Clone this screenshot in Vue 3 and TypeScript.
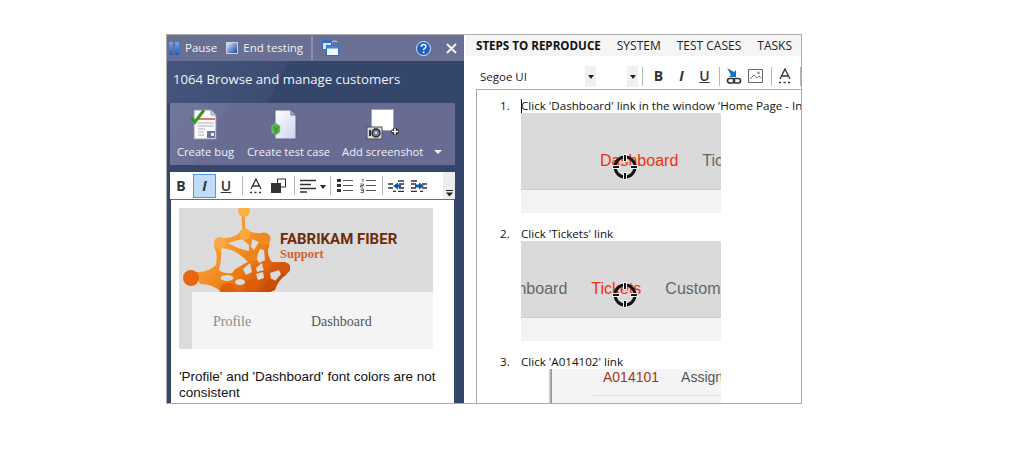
<script setup lang="ts">
const tabs = ['SYSTEM', 'TEST CASES', 'TASKS']
</script>

<template>
  <div class="window">
    <aside class="runner">
      <header class="topbar">
        <svg class="ico-pause" width="11" height="13" viewBox="0 0 11 13">
          <rect x="0" y="0" width="4" height="13" fill="url(#blueBar)" />
          <rect x="6" y="0" width="4" height="13" fill="url(#blueBar)" />
          <defs>
            <linearGradient id="blueBar" x1="0" y1="0" x2="0" y2="1">
              <stop offset="0" stop-color="#6fa8e8" />
              <stop offset="1" stop-color="#1c5fb8" />
            </linearGradient>
            <linearGradient id="blueSquare" x1="0" y1="0" x2="1" y2="1">
              <stop offset="0" stop-color="#e6eefb" />
              <stop offset="1" stop-color="#12409c" />
            </linearGradient>
          </defs>
        </svg>
        <span class="top-label pause">Pause</span>
        <svg class="ico-stop" width="12" height="12" viewBox="0 0 12 12">
          <rect x="0.5" y="0.5" width="11" height="11" fill="url(#blueSquare)" stroke="#c9d2e6" />
        </svg>
        <span class="top-label">End testing</span>
        <i class="top-sep"></i>
        <svg class="ico-windows" width="17" height="16" viewBox="0 0 17 16">
          <rect x="0.5" y="0.5" width="9" height="9" fill="#dfe8f6" stroke="#2f6fc4" />
          <rect x="0.5" y="0.5" width="9" height="2.5" fill="#2f6fc4" />
          <path d="M10 2 q3 -2 5 0" fill="none" stroke="#c8cde0" stroke-width="1.2" />
          <rect x="4.5" y="5.5" width="12" height="10" fill="#f4f7fc" stroke="#2f6fc4" />
          <rect x="4.5" y="5.5" width="12" height="3" fill="#3f83d8" />
        </svg>
        <svg class="ico-help" width="15" height="15" viewBox="0 0 15 15">
          <circle cx="7.5" cy="7.5" r="7" fill="#1d5fc9" stroke="#dfe8fa" stroke-width="1" />
          <path d="M5.2 5.8 q0.2 -2.2 2.4 -2.2 q2.3 0 2.3 2 q0 1.2 -1.3 1.8 q-1 0.5 -1 1.6" fill="none" stroke="#fff" stroke-width="1.5" />
          <rect x="6.8" y="10.4" width="1.6" height="1.7" fill="#fff" />
        </svg>
        <svg class="ico-close" width="11" height="11" viewBox="0 0 11 11">
          <path d="M1 1 L10 10 M10 1 L1 10" stroke="#f2f2f2" stroke-width="2" />
        </svg>
      </header>

      <div class="title">1064 Browse and manage customers</div>

      <div class="actions">
        <button class="action a-bug">
          <svg width="28" height="32" viewBox="0 0 28 32">
            <path d="M4 2 H21 L26 7 V31 H4 Z" fill="#fbfbfd" stroke="#8f93ad" />
            <path d="M21 2 V7 H26" fill="#cfd3e4" stroke="#8f93ad" />
            <path d="M9 11 H25" stroke="#e0402a" stroke-width="1.4" />
            <path d="M8 15 H24 M8 18 H24 M8 21 H15 M8 24 H14 M8 27 H14" stroke="#a9adc2" />
            <rect x="17" y="23" width="8" height="7" fill="#6e7498" />
            <rect x="21" y="25" width="3" height="3" fill="#eee" />
            <path d="M1 9 L5 14 L14 2" fill="none" stroke="#2f9a1e" stroke-width="3" />
          </svg>
          <span>Create bug</span>
        </button>
        <button class="action a-case">
          <svg width="28" height="32" viewBox="0 0 28 32">
            <defs>
              <linearGradient id="pageFill" x1="0" y1="0" x2="1" y2="1">
                <stop offset="0" stop-color="#ffffff" />
                <stop offset="1" stop-color="#ccd4ee" />
              </linearGradient>
            </defs>
            <path d="M5 2 H21 L26 7 V31 H5 Z" fill="url(#pageFill)" stroke="#5d6488" />
            <path d="M21 2 V7 H26 Z" fill="#aeb4cc" stroke="#5d6488" />
            <path d="M6 15 L10 18 V24 L6 27 L2 24 V18 Z" fill="#4fb04a" stroke="#9ad88e" stroke-width="0.7" />
            <path d="M2.5 18.5 L6 21 L9.5 18.5 M6 21 V26.5" fill="none" stroke="#2c7f2e" stroke-width="0.7" />
          </svg>
          <span>Create test case</span>
        </button>
        <button class="action">
          <svg width="34" height="32" viewBox="0 0 34 32">
            <rect x="5.5" y="1.5" width="22" height="21" fill="#fff" stroke="#9b9ba8" stroke-dasharray="2 1" />
            <rect x="1" y="19" width="15" height="12" fill="#d9d9dc" stroke="#4b4b55" />
            <rect x="3" y="22" width="2" height="6" fill="#333" />
            <circle cx="10" cy="25" r="4" fill="#6a7b90" stroke="#222" stroke-width="1.3" />
            <circle cx="10" cy="25" r="1.4" fill="#c5d8ec" />
            <path d="M29 20 V27 M25.5 23.5 H32.5" stroke="#222" stroke-width="3.8" />
            <path d="M29 20.5 V26.5 M26 23.5 H32" stroke="#fff" stroke-width="1.6" />
          </svg>
          <span>Add screenshot</span>
        </button>
        <i class="action-more"></i>
      </div>

      <div class="fmt">
        <span class="btn b-bold">B</span>
        <span class="btn b-italic">I</span>
        <span class="btn b-under">U</span>
        <i class="sep s1"></i>
        <span class="btn">
          <svg width="14" height="16" viewBox="0 0 14 16">
            <path d="M2 11 L7 1 L12 11 M4 8 H10" fill="none" stroke="#333" stroke-width="1.3" />
            <path d="M1 14.5 H13" stroke="#333" stroke-width="1.5" stroke-dasharray="2 2.5" />
          </svg>
        </span>
        <span class="btn w-hl">
          <svg width="15" height="15" viewBox="0 0 15 15">
            <rect x="6.5" y="1" width="8" height="8" fill="none" stroke="#333" />
            <rect x="0" y="5" width="10" height="10" fill="#333" />
          </svg>
        </span>
        <i class="sep s2"></i>
        <span class="btn b-align">
          <svg width="16" height="14" viewBox="0 0 16 14">
            <path d="M0 1.5 H16 M0 5.5 H11 M0 9.5 H16 M0 13 H7" stroke="#333" stroke-width="1.7" />
          </svg>
        </span>
        <span class="caret-btn"></span>
        <i class="sep s2b"></i>
        <span class="btn b-list">
          <svg width="16" height="14" viewBox="0 0 16 14">
            <path d="M0 0 h4 v3 h-4 z M0 5 h4 v3 h-4 z M0 10 h4 v3 h-4 z" fill="#333" />
            <path d="M6 1.5 H16 M6 6.5 H16 M6 11.5 H16" stroke="#555" />
          </svg>
        </span>
        <span class="btn b-num">
          <svg width="16" height="14" viewBox="0 0 16 14">
            <path d="M1 0 h2 v3 M0.5 5 h3 v1.5 h-3 v1.5 h3 M0.5 10 h3 v3.5 h-3 M1 11.5 h2" fill="none" stroke="#555" stroke-width="0.9" />
            <path d="M6 1.5 H16 M6 6.5 H16 M6 11.5 H16" stroke="#555" />
          </svg>
        </span>
        <i class="sep s3"></i>
        <span class="btn">
          <svg width="16" height="12" viewBox="0 0 16 12">
            <path d="M0 4 H5 M0 8 H5 M10 1 H16 M11 4 H16 M11 8 H16 M10 11.5 H16 M5 11.5 H8" stroke="#333" stroke-width="1.4" />
            <path d="M5 6 L10 2.5 V4.5 H13 V7.5 H10 V9.5 Z" fill="#0f55b4" />
          </svg>
        </span>
        <span class="btn b-indent">
          <svg width="16" height="12" viewBox="0 0 16 12">
            <path d="M0 1 H6 M0 4 H5 M0 8 H5 M0 11.5 H6 M11 4 H16 M11 8 H16 M9 11.5 H12" stroke="#333" stroke-width="1.4" />
            <path d="M13 6 L8 2.5 V4.5 H4 V7.5 H8 V9.5 Z" fill="#0f55b4" />
          </svg>
        </span>
        <span class="overflow">
          <svg width="7" height="7" viewBox="0 0 7 7">
            <path d="M0 0.5 H7" stroke="#222" />
            <path d="M0 2.5 H7 L3.5 6.5 Z" fill="#222" />
          </svg>
        </span>
      </div>

      <div class="note">
        <div class="shot">
          <div class="shot-head">
            <svg class="logo" width="111" height="84" viewBox="179 208 111 84">
              <defs>
                <linearGradient id="orange" gradientUnits="userSpaceOnUse" x1="215" y1="225" x2="280" y2="292">
                  <stop offset="0" stop-color="#fdb048" />
                  <stop offset="0.5" stop-color="#ef8218" />
                  <stop offset="1" stop-color="#c23a04" />
                </linearGradient>
              </defs>
              <path fill="none" stroke="#f79a2e" stroke-width="3" d="M244 208 Q242 222 245 234" />
              <path
                fill="url(#orange)"
                d="M241 231 L249 231 Q256 234 264 233 Q272 240 268 250 Q268 258 272 262 L285 262 Q292 268 286 275 Q278 280 275 290 L268 293 L222 293 Q214 284 200 284 L194 272 Q208 273 216 265 Q218 254 214 247 Q216 238 225 238 Q236 238 241 231 Z"
              />
              <g fill="#dcdcdc">
                <path d="M221 248 Q236 249 248 262 Q238 266 232 273 Q224 274 219 270 Q222 259 221 248 Z" />
                <path d="M228 243 L242 239 L249 245 L249 251 Q238 249 228 243 Z" />
                <path d="M252 239 L259 242 L254 250 L251 247 Z" />
                <path d="M260 249 L264 250 L265 260 L259 263 L256 258 Z" />
                <path d="M256 268 L262 263 L264 270 L257 272 Z" />
                <path d="M243 269 L250 263 L252 272 L246 275 Z" />
                <path d="M256 274 L263 272 L264 278 L258 280 Z" />
                <path d="M270 273 L279 270 L281 274 L275 281 L271 279 Z" />
                <ellipse cx="227" cy="278" rx="6.5" ry="3" />
                <ellipse cx="240" cy="282" rx="5" ry="3" />
              </g>
              <circle cx="244" cy="211" r="6" fill="#fbb040" />
              <circle cx="245" cy="234" r="5.5" fill="#f9a83a" />
              <circle cx="220" cy="243" r="6" fill="#fba944" />
              <circle cx="264" cy="239" r="6.5" fill="#f18a1e" />
              <circle cx="252" cy="256" r="5.5" fill="#ee8518" />
              <circle cx="191" cy="278" r="8" fill="#e8670c" />
              <circle cx="285" cy="268" r="5.5" fill="#d6560a" />
              <circle cx="266" cy="266" r="3.5" fill="#e06a0c" />
              <circle cx="238" cy="273" r="4.5" fill="#ea7a10" />
              <circle cx="271" cy="284" r="5" fill="#cf4b08" />
              <circle cx="252" cy="285" r="6" fill="#dc5c0a" />
              <circle cx="228" cy="291" r="8" fill="#e0600c" />
            </svg>
            <div class="brand">
              <div class="brand-name">FABRIKAM FIBER</div>
              <div class="brand-sub">Support</div>
            </div>
          </div>
          <div class="shot-nav">
            <span class="nav-profile">Profile</span>
            <span class="nav-dash">Dashboard</span>
          </div>
        </div>
        <p class="note-text">'Profile' and 'Dashboard' font colors are not consistent</p>
      </div>
    </aside>

    <section class="details">
      <nav class="tabs">
        <span class="tab active">STEPS TO REPRODUCE</span>
        <span v-for="t in tabs" :key="t" class="tab">{{ t }}</span>
      </nav>

      <div class="rt-bar">
        <span class="font-name">Segoe UI</span>
        <span class="drop"></span>
        <span class="drop d2"></span>
        <i class="sep r1"></i>
        <span class="btn b-bold rb">B</span>
        <span class="btn b-italic-plain rb">I</span>
        <span class="btn b-under rb">U</span>
        <i class="sep r2"></i>
        <span class="btn">
          <svg width="16" height="16" viewBox="0 0 16 16">
            <path d="M1 0 L8 4 L10 2 V9 H3 L5 7 Z" fill="#1173c6" />
            <rect x="1.5" y="10.5" width="7" height="4.5" rx="2.2" fill="none" stroke="#333" stroke-width="1.7" />
            <rect x="7.5" y="10.5" width="7" height="4.5" rx="2.2" fill="none" stroke="#333" stroke-width="1.7" />
          </svg>
        </span>
        <span class="btn r-icon2">
          <svg width="15" height="14" viewBox="0 0 15 14">
            <rect x="0.5" y="0.5" width="14" height="13" fill="#fff" stroke="#666" />
            <path d="M2 10 L6 6 L9 9 L11 7 L13 9" fill="none" stroke="#777" />
            <circle cx="10.5" cy="3.8" r="1.2" fill="#888" />
          </svg>
        </span>
        <i class="sep r3"></i>
        <span class="btn">
          <svg width="14" height="16" viewBox="0 0 14 16">
            <path d="M2 11 L7 1 L12 11 M4 8 H10" fill="none" stroke="#333" stroke-width="1.3" />
            <path d="M1 14.5 H13" stroke="#333" stroke-width="1.5" stroke-dasharray="2 2.5" />
          </svg>
        </span>
        <i class="sep r4"></i>
      </div>

      <div class="editor">
        <div class="step">
          <span class="num">1.</span>
          <div class="step-body">
            <div class="line"><i class="text-caret"></i>Click 'Dashboard' link in the window 'Home Page - Internet Explorer'</div>
            <div class="crop">
              <div class="crop-top">
                <span class="hot">Dashboard</span>
                <span class="dim">Tickets</span>
              </div>
              <svg class="target" width="26" height="26" viewBox="0 0 26 26">
                <circle cx="13" cy="13" r="10" fill="none" stroke="#151515" stroke-width="3" />
                <path d="M13 0 V8 M13 18 V26 M0 13 H8 M18 13 H26" stroke="#f4f4f4" stroke-width="4" />
                <path d="M13 1 V7 M13 19 V25 M1 13 H7 M19 13 H25" stroke="#151515" stroke-width="2" />
              </svg>
            </div>
          </div>
        </div>

        <div class="step">
          <span class="num">2.</span>
          <div class="step-body">
            <div class="line">Click 'Tickets' link</div>
            <div class="crop">
              <div class="crop-top">
                <span class="dim shift">Dashboard</span>
                <span class="hot">Tickets</span>
                <span class="dim">Customers</span>
              </div>
              <svg class="target" width="26" height="26" viewBox="0 0 26 26">
                <circle cx="13" cy="13" r="10" fill="none" stroke="#151515" stroke-width="3" />
                <path d="M13 0 V8 M13 18 V26 M0 13 H8 M18 13 H26" stroke="#f4f4f4" stroke-width="4" />
                <path d="M13 1 V7 M13 19 V25 M1 13 H7 M19 13 H25" stroke="#151515" stroke-width="2" />
              </svg>
            </div>
          </div>
        </div>

        <div class="step">
          <span class="num">3.</span>
          <div class="step-body">
            <div class="line">Click 'A014102' link</div>
            <div class="crop crop-table">
              <div class="table-wrap">
                <div class="table-row">
                  <span class="ticket">A014101</span>
                  <span class="assign">Assigned</span>
                </div>
              </div>
            </div>
          </div>
        </div>
      </div>
    </section>
  </div>
</template>

<style scoped>
.window {
  box-sizing: border-box;
  width: 636px;
  height: 370px;
  margin: 34px 0 0 166px;
  display: flex;
  border: 1px solid #ababab;
  font-family: "Open Sans", "Noto Sans", sans-serif;
  background: #fff;
  overflow: hidden;
}

.runner {
  width: 297px;
  flex: none;
  display: flex;
  flex-direction: column;
  background: #34466a;
  color: #f2f2f6;
}

.topbar {
  height: 26px;
  flex: none;
  display: flex;
  align-items: center;
  background: #6a6f94;
  font-size: 11.5px;
}
.ico-pause { margin-left: 2px; }
.top-label { white-space: nowrap; line-height: 16px; }
.pause { margin-left: 5px; }
.ico-stop { margin-left: 9px; }
.topbar .ico-stop + .top-label { margin-left: 5px; }
.top-sep { width: 2px; height: 24px; margin-left: 8px; background: #8d90ad; }
.ico-windows { margin-left: 9px; }
.ico-help { margin-left: 77px; }
.ico-close { margin-left: 15px; }

.title {
  height: 42px;
  flex: none;
  box-sizing: border-box;
  padding: 9px 0 0 6px;
  font-size: 13.2px;
  line-height: 19px;
  background: linear-gradient(118deg, #45557b 0, #3c4c72 38%, #34466a 38.5%);
}

.actions {
  height: 62px;
  flex: none;
  margin: 0 9px 0 3px;
  display: flex;
  align-items: flex-start;
  padding-left: 7px;
  background: linear-gradient(118deg, #73779c 0, #6c7096 18%, #686c92 18.5%);
}
.action {
  display: flex;
  flex-direction: column;
  align-items: center;
  padding: 5px 0 0;
  margin-right: 12px;
  border: 0;
  background: none;
  color: #f2f2f7;
  font: 11.2px/16px "Open Sans", "Noto Sans", sans-serif;
  white-space: nowrap;
}
.action span { margin-top: 4px; }
.a-bug { margin-right: 13px; }
.a-bug svg { margin-right: 3px; }
.a-case svg { margin-right: 10px; }
.action-more {
  margin: 47px 0 0 -1px;
  border: 4px solid transparent;
  border-top: 4px solid #f2f2f7;
  border-bottom: 0;
  width: 0;
  height: 0;
}

.fmt {
  height: 27px;
  flex: none;
  margin: 7px 9px 0 3px;
  display: flex;
  align-items: center;
  padding-left: 1px;
  background: #fff;
  color: #333;
}
.btn {
  width: 20px;
  flex: none;
  display: flex;
  align-items: center;
  justify-content: center;
  font-size: 14px;
  line-height: 16px;
}
.b-bold { font-weight: 700; }
.b-under { text-decoration: underline; font-weight: 600; }
.b-italic {
  box-sizing: border-box;
  width: 23px;
  height: 24px;
  margin-left: 2px;
  border: 1px solid #4a9ae8;
  background: #bfdcf8;
  font-style: italic;
  font-weight: 700;
}
.b-italic-plain { font-style: italic; font-weight: 700; }
.sep { width: 1px; height: 19px; flex: none; background: #b5b5b5; }
.s1 { margin: 0 3px 0 6px; }
.w-hl { width: 25px; }
.s2 { margin: 0 3px; }
.caret-btn {
  width: 0;
  height: 0;
  margin: 2px 3px 0 2px;
  border: 3px solid transparent;
  border-top: 4px solid #222;
  border-bottom: 0;
}
.s2b { margin: 0 4px 0 1px; }
.b-num { margin-left: 3px; }
.s3 { margin: 0 3px 0 4px; }
.b-indent { margin-left: 3px; }
.overflow {
  width: 12px;
  height: 27px;
  margin-left: auto;
  display: flex;
  align-items: flex-end;
  justify-content: center;
  padding-bottom: 2px;
  box-sizing: border-box;
  background: #eeeeee;
}

.note {
  flex: 1;
  min-height: 0;
  margin: 0 10px 0 4px;
  border-top: 1px solid #6d6d6d;
  padding: 8px 0 0 8px;
  background: #fff;
  overflow: hidden;
}
.shot {
  width: 254px;
  height: 141px;
  background: repeating-conic-gradient(#dedede 0 25%, #d9d9d9 0 50%) 0 0 / 2px 2px;
}
.shot-head { height: 84px; display: flex; overflow: hidden; }
.logo { flex: none; }
.brand { margin-left: -10px; padding-top: 23px; }
.brand-name {
  font-family: Roboto, "Liberation Sans", sans-serif;
  font-size: 15px;
  line-height: 16px;
  font-weight: 700;
  color: #6d2c0a;
  white-space: nowrap;
}
.brand-sub {
  font-family: "Liberation Serif", serif;
  font-size: 12.5px;
  font-weight: 700;
  line-height: 14px;
  color: #d2622a;
}
.shot-nav {
  height: 57px;
  box-sizing: border-box;
  margin-left: 13px;
  display: flex;
  align-items: center;
  padding: 3px 0 0 21px;
  background: #f4f4f4;
  font-family: "Liberation Serif", serif;
  font-size: 14px;
}
.nav-profile { color: #8a8a8a; width: 98px; }
.nav-dash { color: #555; }
.note-text {
  margin: 20px 0 0;
  width: 270px;
  font-family: "Liberation Sans", sans-serif;
  font-size: 13.5px;
  line-height: 16px;
  color: #111;
}

.details {
  flex: 1;
  min-width: 0;
  display: flex;
  flex-direction: column;
}
.tabs {
  height: 21px;
  flex: none;
  margin-left: 2px;
  display: flex;
  align-items: center;
  gap: 16px;
  padding-left: 10px;
  background: #f5f5f5;
  font-size: 12px;
  color: #222;
  white-space: nowrap;
}
.tab.active { font-size: 11.6px; font-weight: 700; color: #111; }

.rt-bar {
  height: 33px;
  flex: none;
  display: flex;
  align-items: center;
  padding-top: 7px;
  box-sizing: border-box;
  color: #333;
}
.font-name { width: 106px; margin-left: 16px; font-size: 11.5px; color: #222; }
.drop {
  position: relative;
  width: 11px;
  height: 21px;
  background: #f0f0f0;
}
.drop::after {
  content: "";
  position: absolute;
  left: 3px;
  top: 9px;
  border: 3px solid transparent;
  border-top: 4px solid #222;
  border-bottom: 0;
}
.d2 { margin-left: 31px; }
.r1 { margin: 0 4px; }
.rb { width: 23px; flex: none; }
.r2 { margin: 0 4px 0 3px; }
.r-icon2 { margin-left: 2px; }
.r3 { margin: 0 3px 0 5px; }
.r4 { margin-left: 5px; }

.editor {
  flex: 1;
  min-height: 0;
  margin-left: 12px;
  padding-top: 8px;
  border-top: 1px solid #ababab;
  border-left: 1px solid #ababab;
  overflow: hidden;
  font-size: 11.6px;
  color: #111;
}
.step { display: flex; margin-bottom: 13px; }
.num { width: 21px; margin-left: 23px; flex: none; line-height: 15px; }
.step-body { flex: none; width: 400px; }
.line { position: relative; height: 15px; line-height: 15px; white-space: nowrap; }
.text-caret {
  position: absolute;
  left: 0;
  top: 1px;
  width: 1px;
  height: 14px;
  background: #111;
}
.crop {
  position: relative;
  width: 200px;
  height: 100px;
  overflow: hidden;
  background: #f3f3f3;
  font-family: "Liberation Sans", sans-serif;
}
.crop-top {
  height: 77px;
  box-sizing: border-box;
  display: flex;
  padding: 38px 0 0 79px;
  gap: 24px;
  border-bottom: 1px solid #cfcfcf;
  background: repeating-conic-gradient(#dedede 0 25%, #d6d6d6 0 50%) 0 0 / 2px 2px;
  font-size: 16px;
  line-height: 20px;
  white-space: nowrap;
}
.hot { color: #f0300f; }
.dim { color: #666; }
.shift { margin-left: -111px; }
.target { position: absolute; left: 91px; top: 41px; }

.crop-table {
  height: 35px;
  background: #fff;
  padding-left: 28px;
  box-sizing: border-box;
}
.table-wrap {
  height: 35px;
  background: linear-gradient(90deg, #dddddd 0, #888888 3px, #f4f4f4 3.5px);
}
.table-row {
  height: 27px;
  margin-left: 44px;
  padding-left: 10px;
  box-sizing: border-box;
  display: flex;
  gap: 22px;
  border-bottom: 1px solid #dddddd;
  font-size: 14px;
  line-height: 17px;
  white-space: nowrap;
}
.ticket { color: #a83220; }
.assign { color: #555; }
</style>

<style>
html, body { background: #fff; }
</style>
